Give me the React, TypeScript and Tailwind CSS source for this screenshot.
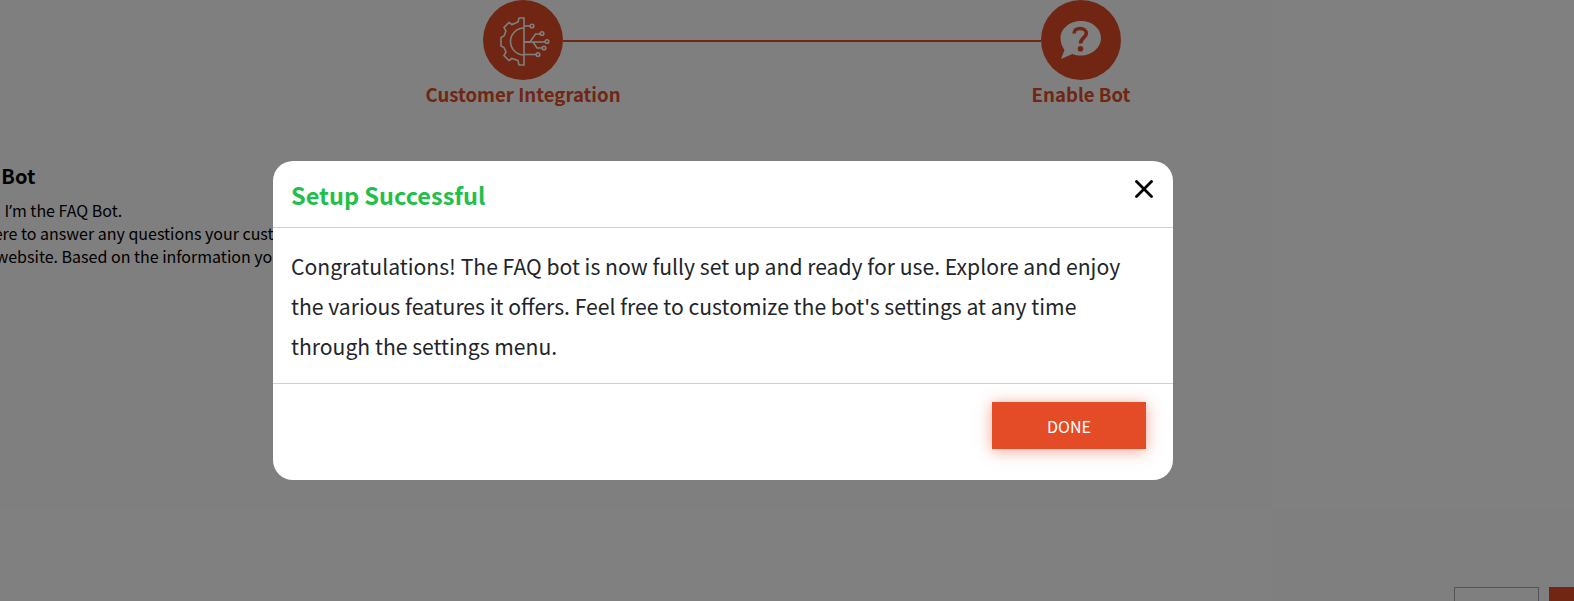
const font = "font-['Noto_Sans_CJK_SC','Noto_Sans',sans-serif]";

function GearIcon() {
  return (
    <svg width="80" height="80" viewBox="0 0 80 80" fill="none" stroke="#fff" strokeWidth="1.6">
      <path d="M41 18H36L35 22L29 24.500L26 22.500L21 27.500L23 31L21 36L18 37.500V46L21 47.500L23 52L21 55.500L26 60.500L29 58.500L35 60.500L36 65H41V18Z" />
      <path d="M41 28A13.500 13.500 0 0 0 41 55" />
      <path d="M41 26H47.500" />
      <path d="M41 42H47L52.500 34H57.500" />
      <path d="M41 42H62" />
      <path d="M50 42L54 48H59" />
      <path d="M41 54.500H53" />
      <circle cx="49" cy="26" r="1.800" />
      <circle cx="59" cy="33.500" r="1.800" />
      <circle cx="64" cy="41.500" r="1.800" />
      <circle cx="61" cy="48" r="1.800" />
      <circle cx="55" cy="54.500" r="1.800" />
    </svg>
  );
}

function QuestionIcon() {
  return (
    <svg width="80" height="80" viewBox="0 0 80 80" fill="none">
      <path d="M40 21C51 21 60 28.500 60 38C60 47.500 51 55.500 40 55.500C37 55.500 34 55 31.500 54L20 59L23.500 50C21 46.500 19.500 42.500 19.500 38C19.500 28.500 29 21 40 21Z" fill="#fff" />
      <path d="M33 33.500C33 30.200 35.800 28.500 39 28.500C42.500 28.500 45.300 30.500 45.300 33.500C45.300 37.500 39.500 38 39.500 43.500" stroke="#e34c26" strokeWidth="3.600" />
      <circle cx="39.500" cy="48.800" r="2.800" fill="#e34c26" />
    </svg>
  );
}

function Step({ label, icon }: { label: string; icon: React.ReactNode }) {
  return (
    <div className="flex w-[80px] shrink-0 flex-col items-center">
      <div className="h-[80px] w-[80px] rounded-full bg-[#e34c26]">{icon}</div>
      <div className="whitespace-nowrap text-[18.6px] leading-[28px] font-bold text-[#e34c26]">{label}</div>
    </div>
  );
}

const Apos = () => <span className="font-['Noto_Sans']">’</span>;

export default function App() {
  return (
    <div className={`relative h-[601px] w-[1574px] overflow-hidden bg-white ${font}`}>
      <div className="flex items-start pl-[483px]">
        <Step label="Customer Integration" icon={<GearIcon />} />
        <div className="mt-[40px] h-[2px] w-[478px] bg-[#e34c26]" />
        <Step label="Enable Bot" icon={<QuestionIcon />} />
      </div>

      <div className="mt-[52px] ml-[-42px] whitespace-nowrap text-black">
        <h3 className="text-[20px] leading-[32px] font-bold">FAQ Bot</h3>
        <div className="mt-[6.5px] text-[16px] leading-[22.4px]">
          <p>Hello&nbsp; I<Apos />m the FAQ Bot.</p>
          <p>I<Apos />m here to answer any questions your customers may have</p>
          <p>your website. Based on the information you provide</p>
        </div>
      </div>

      <div className="mt-[319px] flex justify-end gap-[10px]">
        <div className="h-[40px] w-[85px] shrink-0 border border-[#a9a9a9] bg-white" />
        <div className="mr-[-60px] h-[40px] w-[85px] shrink-0 bg-[#e34c26]" />
      </div>

      <div className="absolute inset-0 bg-black/50 pt-[161px] pl-[273px]">
        <div className="h-[319px] w-[900px] rounded-[20px] bg-white">
          <div className="flex h-[67px] items-start justify-between border-b border-[#d0d0d0] pr-[20px] pl-[18px]">
            <h2 className="pt-[17px] text-[23.5px] leading-[34px] font-bold text-[#22c04a]">Setup Successful</h2>
            <svg className="mt-[19px]" width="18" height="18" viewBox="0 0 18 18" stroke="#000" strokeWidth="2.800" strokeLinecap="round">
              <path d="M1.500 1.500L16.500 16.500M16.500 1.500L1.500 16.500" />
            </svg>
          </div>
          <div className="h-[156px] border-b border-[#d0d0d0] pt-[17.5px] pr-[45px] pl-[18px] text-[21.15px] leading-[40px] text-[#212529]">
            Congratulations! The FAQ bot is now fully set up and ready for use. Explore and enjoy the various features it offers. Feel free to customize the bot's settings at any time through the settings menu.
          </div>
          <div className="flex justify-end pt-[18px] pr-[27px]">
            <button className="h-[47px] w-[154px] bg-[#e34c26] text-[16px] text-white shadow-[0_2px_14px_rgba(227,76,38,0.5)]">DONE</button>
          </div>
        </div>
      </div>
    </div>
  );
}
